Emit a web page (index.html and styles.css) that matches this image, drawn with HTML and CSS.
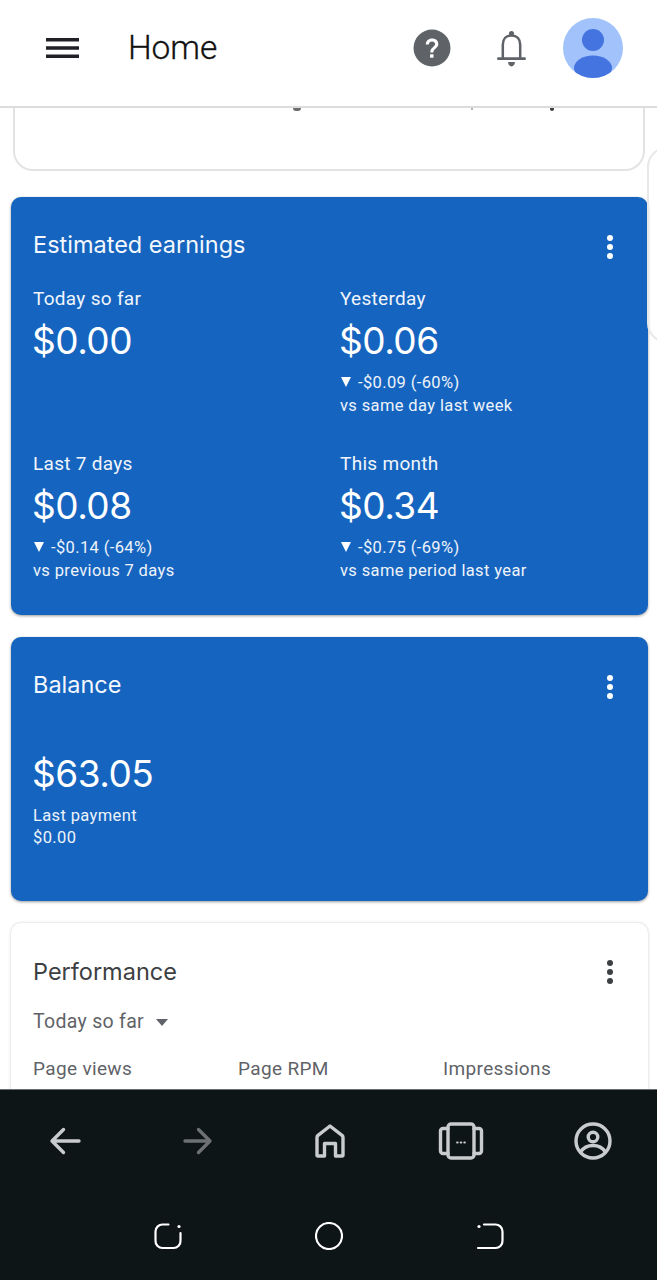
FILE: index.html
```html
<!DOCTYPE html>
<html lang="en">
<head>
<meta charset="utf-8">
<title>Home</title>
<link rel="stylesheet" href="styles.css">
</head>
<body>
<div class="screen">
  <header class="topbar">
    <svg class="menu-icon" viewBox="0 0 34 24"><path d="M0 3.500h34M0 12h34M0 20.500h34" /></svg>
    <h1 class="page-title">Home</h1>
    <div class="top-actions">
      <svg class="help-icon" viewBox="0 0 38 38"><circle cx="19" cy="19" r="18.500" fill="#5f6368"/><path d="M12.800 15.500c0-3.700 2.700-6 6.300-6s6.200 2.200 6.200 5.400c0 4.400-5 4.500-5 8.700h-3c0-5.300 4.800-5.500 4.800-8.500 0-1.500-1.200-2.700-3-2.700s-3.100 1.200-3.300 3.100z" fill="#fff"/><rect x="17.100" y="25.300" width="3.400" height="3.400" fill="#fff"/></svg>
      <svg class="bell-icon" viewBox="0 0 30 38"><path d="M6 29V15c0-6 3.500-9.500 9-9.500s9 3.500 9 9.500v14" fill="none" stroke="#5f6368" stroke-width="2.600"/><path d="M1.500 29.500h27" stroke="#5f6368" stroke-width="3" stroke-linecap="round"/><circle cx="15" cy="3.500" r="2.600" fill="#5f6368"/><path d="M11.500 33h7c0 2.500-1.500 4.500-3.500 4.500s-3.500-2-3.500-4.500z" fill="#5f6368"/></svg>
      <svg class="avatar" viewBox="0 0 60 60"><defs><clipPath id="av"><circle cx="30" cy="30" r="30"/></clipPath></defs><circle cx="30" cy="30" r="30" fill="#a1c2fa"/><g clip-path="url(#av)" fill="#4374e0"><circle cx="30" cy="22" r="11"/><ellipse cx="30" cy="50" rx="19" ry="12.500"/></g></svg>
    </div>
  </header>

  <main class="content">
    <div class="stub-card">
      <span class="tick tick-g"></span>
      <span class="tick tick-a"></span>
      <span class="tick tick-b"></span>
    </div>
    <div class="peek-card"></div>

    <section class="card card-blue earnings">
      <div class="card-head">
        <h2 class="card-title">Estimated earnings</h2>
        <span class="kebab"><i></i><i></i><i></i></span>
      </div>
      <div class="stats">
        <div class="stat">
          <div class="stat-label">Today so far</div>
          <div class="stat-value">$0.00</div>
        </div>
        <div class="stat">
          <div class="stat-label">Yesterday</div>
          <div class="stat-value">$0.06</div>
          <div class="stat-note"><span class="tri"></span>-$0.09 (-60%)</div>
          <div class="stat-note">vs same day last week</div>
        </div>
        <div class="stat">
          <div class="stat-label">Last 7 days</div>
          <div class="stat-value">$0.08</div>
          <div class="stat-note"><span class="tri"></span>-$0.14 (-64%)</div>
          <div class="stat-note">vs previous 7 days</div>
        </div>
        <div class="stat">
          <div class="stat-label">This month</div>
          <div class="stat-value">$0.34</div>
          <div class="stat-note"><span class="tri"></span>-$0.75 (-69%)</div>
          <div class="stat-note">vs same period last year</div>
        </div>
      </div>
    </section>

    <section class="card card-blue balance">
      <div class="card-head">
        <h2 class="card-title">Balance</h2>
        <span class="kebab"><i></i><i></i><i></i></span>
      </div>
      <div class="stat-value balance-value">$63.05</div>
      <div class="stat-note">Last payment</div>
      <div class="stat-note">$0.00</div>
    </section>

    <section class="card card-white performance">
      <div class="card-head">
        <h2 class="card-title">Performance</h2>
        <span class="kebab"><i></i><i></i><i></i></span>
      </div>
      <div class="range">Today so far <span class="caret"></span></div>
      <div class="metrics">
        <span>Page views</span>
        <span>Page RPM</span>
        <span>Impressions</span>
      </div>
    </section>
  </main>

  <footer class="chrome">
    <nav class="browser-bar">
      <svg class="nav-icon back" viewBox="0 0 32 32"><path d="M30 16H3M14.500 4.500 3 16l11.500 11.500" /></svg>
      <svg class="nav-icon dim" viewBox="0 0 32 32"><path d="M4 16h25M17.500 4.500 29 16 17.500 27.500" /></svg>
      <svg class="nav-icon home" viewBox="0 0 32 36"><path d="M3 32V14.500c0-1 .3-1.500 1-2.200L16 3l12 9.300c.7.700 1 1.200 1 2.200V32a1 1 0 0 1-1 1h-6.500V20.500h-11V33H4a1 1 0 0 1-1-1z" /></svg>
      <svg class="nav-icon tabs" viewBox="0 0 46 38"><rect x="10" y="2" width="26" height="34" rx="3"/><path d="M10 6.500H5a2.500 2.500 0 0 0-2.500 2.500v20A2.500 2.500 0 0 0 5 31.500h5M36 6.500h5A2.500 2.500 0 0 1 43.500 9v20a2.500 2.500 0 0 1-2.500 2.500h-5"/><path class="dots" d="M19 20.500h.8M22.600 20.500h.8M26.200 20.500h.8"/></svg>
      <svg class="nav-icon profile" viewBox="0 0 38 38"><circle cx="19" cy="19" r="17"/><circle cx="19" cy="15" r="4.800"/><path d="M6.500 30c3-4.500 7.500-6.500 12.500-6.500s9.500 2 12.500 6.500"/></svg>
    </nav>
    <nav class="system-bar">
      <svg class="sys-icon" viewBox="0 0 28 28"><path d="M14.500 2.500H9a7 7 0 0 0-7.500 7v9A7 7 0 0 0 9 26h10a7 7 0 0 0 7.500-7.500V11"/><circle class="dot" cx="25" cy="4.500" r="1.600"/></svg>
      <svg class="sys-icon" viewBox="0 0 28 28"><circle cx="14" cy="14" r="13"/></svg>
      <svg class="sys-icon" viewBox="0 0 28 28"><path d="M8 2.500h11a7 7 0 0 1 7.500 7v9A7 7 0 0 1 19 26H2"/><circle class="dot" cx="3" cy="4.500" r="1.600"/></svg>
    </nav>
  </footer>
</div>
</body>
</html>
```
FILE: styles.css
```css
* { box-sizing: border-box; }
html, body { margin: 0; padding: 0; }
body { background: #fff; font-family: Roboto, "Liberation Sans", sans-serif; }
.screen { width: 657px; height: 1280px; display: flex; flex-direction: column; overflow: hidden; }

.topbar { flex: 0 0 108px; display: flex; align-items: center; padding: 0 34px 10px 46px; background: #fff; border-bottom: 2px solid #dcdcdc; }
.menu-icon { width: 33px; height: 24px; fill: none; stroke: #202124; stroke-width: 3.400; }
.page-title { margin: 0 0 0 49px; font: 300 33.500px/40px Roboto, sans-serif; color: #111; letter-spacing: -0.1px; -webkit-text-stroke: 0.3px #111; }
.top-actions { margin-left: auto; display: flex; align-items: center; }
.help-icon { width: 38px; height: 38px; }
.bell-icon { width: 29px; height: 37px; margin-left: 46px; }
.avatar { width: 60px; height: 60px; margin-left: 37px; }

.content { flex: 1; position: relative; overflow: hidden; background: #fff; padding-left: 11px; padding-right: 9px; min-height: 0; }
.stub-card { position: relative; height: 63px; margin: 0 3px 0 2px; background: #fff; border: 2px solid #e3e3e3; border-top: 0; border-radius: 0 0 20px 20px; }
.tick { position: absolute; top: 0; height: 2px; background: #3c4043; }
.tick-g { left: 278px; width: 8px; height: 3px; border-radius: 0 0 4px 4px; background: #6a6d70; }
.tick-a { left: 456px; width: 2px; background: #b5b5b5; }
.tick-b { left: 535px; width: 4px; height: 3px; border-radius: 0 0 3px 3px; }
.peek-card { position: absolute; left: 647px; top: 39px; width: 40px; height: 196px; border: 2px solid #e8e8e8; border-radius: 20px; }

.card { border-radius: 10px; padding: 0 22px; }
.card-blue { background: #1565c0; color: #fff; box-shadow: 0 1px 3px rgba(0,0,0,.4); }
.card-white { background: #fff; color: #5f6368; box-shadow: 0 0 3px rgba(0,0,0,.22); }
.earnings { height: 418px; margin-top: 26px; padding-top: 32px; }
.balance { height: 264px; margin-top: 22px; padding-top: 32px; }
.performance { height: 220px; margin-top: 22px; padding-top: 33px; }

.card-head { display: flex; justify-content: space-between; align-items: center; height: 32px; padding-right: 13px; }
.card-title { margin: 0; font: 400 23.500px/32px Inter, Roboto, sans-serif; letter-spacing: 0; }
.card-blue .card-title { color: #f4f7fc; }
.card-white .card-title { color: #3c4043; }
.kebab { display: flex; flex-direction: column; gap: 3px; }
.kebab i { display: block; width: 6px; height: 6px; border-radius: 50%; background: #fff; }
.card-blue .kebab { margin-top: 3px; }
.card-white .kebab i { background: #3c4043; }

.stats { display: grid; grid-template-columns: 307px 1fr; grid-template-rows: 165px 1fr; margin-top: 24px; }
.stat-label { font-size: 19px; line-height: 28px; letter-spacing: 0.3px; color: #f1f5fb; }
.stat-value { font: 400 37px/44px Inter, Roboto, sans-serif; letter-spacing: -0.5px; margin: 6px 0 9px -1px; }
.stat-note { font-size: 16.500px; line-height: 22.500px; letter-spacing: 0.37px; color: #eef3fa; }
.tri { display: inline-block; width: 0; height: 0; margin: 0 7px 1px 1px; border-left: 5.500px solid transparent; border-right: 5.500px solid transparent; border-top: 10px solid #fff; }
.balance-value { margin-top: 51px; margin-bottom: 9px; }
.balance .stat-note { line-height: 22px; }

.range { margin-top: 21px; font-size: 19.500px; line-height: 26px; letter-spacing: 0.3px; display: flex; align-items: center; gap: 12px; }
.caret { width: 0; height: 0; border-left: 6.500px solid transparent; border-right: 6.500px solid transparent; border-top: 7px solid #5f6368; }
.metrics { display: grid; grid-template-columns: 205px 205px 1fr; margin-top: 21px; font-size: 19px; line-height: 26px; letter-spacing: 0.35px; }

.chrome { flex: 0 0 190px; background: #0e1517; border-top: 1px solid #6a6e70; }
.browser-bar { height: 100px; padding-top: 2px; display: grid; grid-template-columns: repeat(5, 1fr); justify-items: center; align-items: center; }
.nav-icon { width: 32px; height: 36px; fill: none; stroke: #c9cccd; stroke-width: 3.400; stroke-linecap: round; stroke-linejoin: round; }
.nav-icon.back { margin-right: 1px; }
.nav-icon.dim { stroke: #6d7172; }
.nav-icon.home { margin-left: 3px; }
.nav-icon.tabs { width: 46px; height: 38px; margin-left: 3px; }
.nav-icon.profile { width: 38px; height: 38px; margin-left: 3px; }
.nav-icon .dots { stroke-width: 1.800; }
.system-bar { height: 90px; display: flex; justify-content: center; gap: 133px; align-items: flex-start; padding-top: 32px; }
.sys-icon { width: 28px; height: 28px; fill: none; stroke: #fff; stroke-width: 2.200; stroke-linecap: round; }
.sys-icon .dot { fill: #fff; stroke: none; }
```
